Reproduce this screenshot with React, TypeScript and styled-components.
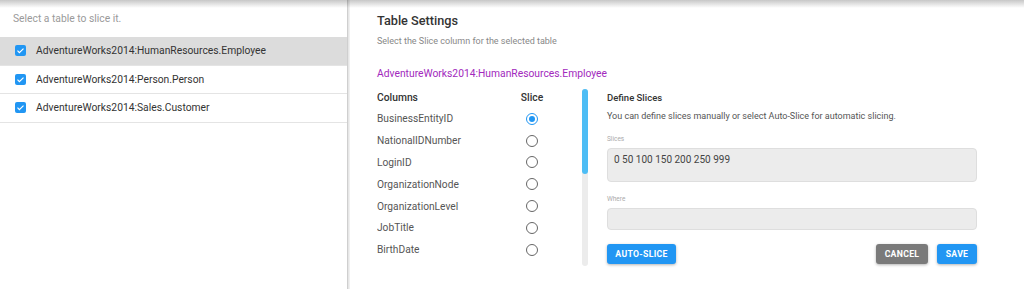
import React from "react";
import styled, { createGlobalStyle } from "styled-components";

const GlobalStyle = createGlobalStyle`
  html, body {
    margin: 0;
    padding: 0;
    background: #fff;
    font-family: Roboto, "Liberation Sans", sans-serif;
  }
`;

const Page = styled.div`
  position: relative;
  display: flex;
  height: 289px;
  width: 1024px;
  overflow: hidden;
  background: #fff;

  &::before {
    content: "";
    position: absolute;
    left: 0;
    right: 0;
    top: 0;
    height: 8px;
    background: linear-gradient(to bottom, rgba(0, 0, 0, 0.22), rgba(0, 0, 0, 0));
    pointer-events: none;
    z-index: 2;
  }
`;

const Sidebar = styled.aside`
  width: 347px;
  flex-shrink: 0;
  border-right: 1px solid #cfcfcf;
  box-shadow: 1px 0 0 #e6e6e6, 2px 0 0 #f0f0f0;
`;

const Hint = styled.div`
  padding: 12px 13px 11px;
  font-size: 10.3px;
  color: #9a9a9a;
  line-height: 14px;
`;

const TableRow = styled.div<{ $active?: boolean }>`
  display: flex;
  align-items: center;
  gap: 10px;
  height: 27.5px;
  padding-left: 15px;
  border-bottom: 1px solid #e4e4e4;
  background: ${(p) => (p.$active ? "#dcdcdc" : "transparent")};
  font-size: 10.3px;
  color: #333;
`;

const Check = styled.span`
  width: 11px;
  height: 11px;
  border-radius: 2px;
  background: #2196f3;
  display: flex;
  align-items: center;
  justify-content: center;
`;

const Main = styled.main`
  flex: 1;
  padding: 12px 0 0 29px;
  display: flex;
  flex-direction: column;
`;

const Title = styled.h2`
  margin: 0;
  font-size: 12.7px;
  font-weight: 500;
  color: #333;
  line-height: 18px;
`;

const Sub = styled.div`
  margin-top: 5px;
  font-size: 9px;
  color: #888;
  line-height: 12px;
`;

const Entity = styled.div`
  margin-top: 20px;
  font-size: 10.3px;
  color: #a229bd;
  line-height: 14px;
`;

const Body = styled.div`
  display: flex;
  margin-top: 6px;
`;

const ColumnsBox = styled.div`
  display: flex;
  width: 211px;
  height: 178px;
`;

const ColumnList = styled.div`
  flex: 1;
  overflow: hidden;
`;

const ColRow = styled.div<{ $head?: boolean }>`
  display: grid;
  grid-template-columns: 140px 30px;
  align-items: center;
  height: ${(p) => (p.$head ? "21px" : "21.8px")};
  font-size: ${(p) => (p.$head ? "10.3px" : "10.2px")};
  font-weight: ${(p) => (p.$head ? 500 : 400)};
  color: ${(p) => (p.$head ? "#333" : "#555")};
`;

const SliceCell = styled.div`
  display: flex;
  justify-content: center;
`;

const Radio = styled.span<{ $on?: boolean }>`
  width: 12px;
  height: 12px;
  border-radius: 50%;
  box-sizing: border-box;
  border: 1.5px solid ${(p) => (p.$on ? "#2196f3" : "#666")};
  display: flex;
  align-items: center;
  justify-content: center;

  &::after {
    content: "";
    width: 6px;
    height: 6px;
    border-radius: 50%;
    background: ${(p) => (p.$on ? "#2196f3" : "transparent")};
  }
`;

const Track = styled.div`
  width: 6px;
  margin-top: 2px;
  height: 177px;
  background: #ececec;
  border-radius: 3px;
  display: flex;
  flex-direction: column;
`;

const Thumb = styled.div`
  height: 85px;
  border-radius: 3px;
  background: #4dbdf5;
`;

const Slices = styled.section`
  margin-left: 19px;
  width: 370px;
`;

const SectionTitle = styled.div`
  font-size: 9.5px;
  font-weight: 500;
  color: #333;
  line-height: 12px;
  margin-top: 5px;
`;

const Desc = styled.div`
  margin-top: 6px;
  font-size: 9px;
  color: #555;
  line-height: 12px;
`;

const Label = styled.div<{ $gap: number }>`
  margin-top: ${(p) => p.$gap}px;
  font-size: 6.5px;
  color: #aaa;
  line-height: 8px;
`;

const Field = styled.div<{ $tall?: boolean }>`
  margin-top: 5px;
  height: ${(p) => (p.$tall ? "34px" : "22px")};
  box-sizing: border-box;
  background: #ececec;
  border: 1px solid #dedede;
  border-radius: 4px;
  padding: 5px 6px;
  font-size: 10px;
  color: #444;
  line-height: 12px;
`;

const Actions = styled.div`
  display: flex;
  align-items: center;
  gap: 9px;
  margin-top: 14px;
`;

const Spacer = styled.div`
  flex: 1;
`;

const Button = styled.button<{ $gray?: boolean; $w: number }>`
  width: ${(p) => p.$w}px;
  height: 20px;
  border: none;
  border-radius: 3px;
  background: ${(p) => (p.$gray ? "#7a7a7a" : "#2196f3")};
  color: #fff;
  font-family: Roboto, "Liberation Sans", sans-serif;
  font-size: 8.7px;
  font-weight: 700;
  letter-spacing: 0.3px;
  padding: 0;
  box-shadow: 0 1px 3px rgba(0, 0, 0, 0.3);
`;

const tables = [
  "AdventureWorks2014:HumanResources.Employee",
  "AdventureWorks2014:Person.Person",
  "AdventureWorks2014:Sales.Customer",
];

const columns = [
  "BusinessEntityID",
  "NationalIDNumber",
  "LoginID",
  "OrganizationNode",
  "OrganizationLevel",
  "JobTitle",
  "BirthDate",
  "MaritalStatus",
];

const CheckMark = () => (
  <svg width="9" height="9" viewBox="0 0 24 24">
    <path d="M4 12.5l5 5L20 7" fill="none" stroke="#fff" strokeWidth="3.2" />
  </svg>
);

export default function App() {
  return (
    <>
      <GlobalStyle />
      <Page>
        <Sidebar>
          <Hint>Select a table to slice it.</Hint>
          {tables.map((t, i) => (
            <TableRow key={t} $active={i === 0}>
              <Check>
                <CheckMark />
              </Check>
              {t}
            </TableRow>
          ))}
        </Sidebar>
        <Main>
          <Title>Table Settings</Title>
          <Sub>Select the Slice column for the selected table</Sub>
          <Entity>AdventureWorks2014:HumanResources.Employee</Entity>
          <Body>
            <ColumnsBox>
              <ColumnList>
                <ColRow $head>
                  <span>Columns</span>
                  <SliceCell>Slice</SliceCell>
                </ColRow>
                {columns.map((c, i) => (
                  <ColRow key={c}>
                    <span>{c}</span>
                    <SliceCell>
                      <Radio $on={i === 0} />
                    </SliceCell>
                  </ColRow>
                ))}
              </ColumnList>
              <Track>
                <Thumb />
              </Track>
            </ColumnsBox>
            <Slices>
              <SectionTitle>Define Slices</SectionTitle>
              <Desc>You can define slices manually or select Auto-Slice for automatic slicing.</Desc>
              <Label $gap={13}>Slices</Label>
              <Field $tall>0 50 100 150 200 250 999</Field>
              <Label $gap={13}>Where</Label>
              <Field />
              <Actions>
                <Button $w={69}>AUTO-SLICE</Button>
                <Spacer />
                <Button $gray $w={52}>CANCEL</Button>
                <Button $w={40}>SAVE</Button>
              </Actions>
            </Slices>
          </Body>
        </Main>
      </Page>
    </>
  );
}
